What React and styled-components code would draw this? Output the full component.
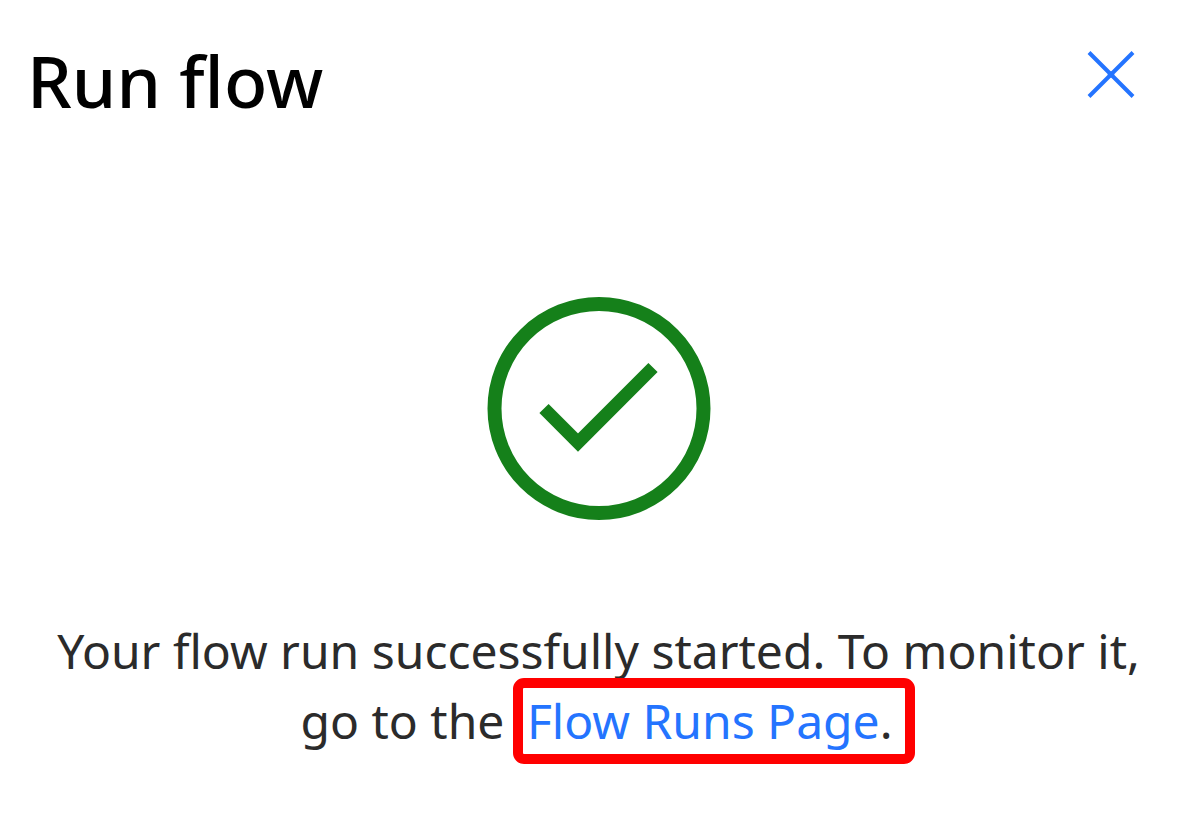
import React from "react";
import styled, { createGlobalStyle } from "styled-components";

const GlobalStyle = createGlobalStyle`
  * { box-sizing: border-box; }
  body {
    margin: 0;
    background: #ffffff;
    color: #2b2b2b;
    font-family: "Noto Sans", "Open Sans", sans-serif;
  }
`;

const Panel = styled.section`
  display: flex;
  flex-direction: column;
  padding: 40px 30px 48px 27px;
`;

const Header = styled.header`
  display: flex;
  align-items: flex-start;
  justify-content: space-between;
  padding-right: 25px;
`;

const Title = styled.h1`
  margin: 0;
  font-size: 71px;
  line-height: 82px;
  font-weight: 500;
  color: #000000;
`;

const CloseButton = styled.button`
  display: flex;
  padding: 8px;
  border: 0;
  background: transparent;
  color: #2474ff;
  cursor: pointer;
`;

const StatusIcon = styled.svg`
  align-self: center;
  width: 224px;
  height: 224px;
  margin-top: 174px;
`;

const Message = styled.p`
  margin: 96px 0 0;
  font-size: 48px;
  line-height: 70px;
  text-align: center;
`;

const Highlight = styled.span`
  display: inline-block;
  margin: 0 -8px 0 6px;
  padding: 0 12px 0 4px;
  line-height: 66px;
  outline: 10px solid #ff0000;
  border-radius: 1px;
`;

const RunsLink = styled.a`
  color: #2474ff;
  text-decoration: none;
`;

export default function App() {
  return (
    <>
      <GlobalStyle />
      <Panel>
        <Header>
          <Title>Run flow</Title>
          <CloseButton type="button" aria-label="Close">
            <svg width="52" height="52" viewBox="0 0 52 52" fill="none" stroke="currentColor" strokeWidth="4">
              <path d="M4 4.5L48 48.5M48 4.5L4 48.5" />
              <path d="M26 23L29.5 26.5L26 30L22.5 26.5Z" fill="currentColor" stroke="none" />
            </svg>
          </CloseButton>
        </Header>
        <StatusIcon viewBox="0 0 224 224" fill="none" stroke="#15801a" aria-hidden="true">
          <circle cx="112" cy="112.5" r="104.5" strokeWidth="14" />
          <path d="M57 112.5L91 146.5L166 71.5" strokeWidth="13" />
        </StatusIcon>
        <Message>
          Your flow run successfully started. To monitor it,
          <br />
          go to the <Highlight><RunsLink href="#flow-runs">Flow Runs Page</RunsLink>.</Highlight>
        </Message>
      </Panel>
    </>
  );
}
